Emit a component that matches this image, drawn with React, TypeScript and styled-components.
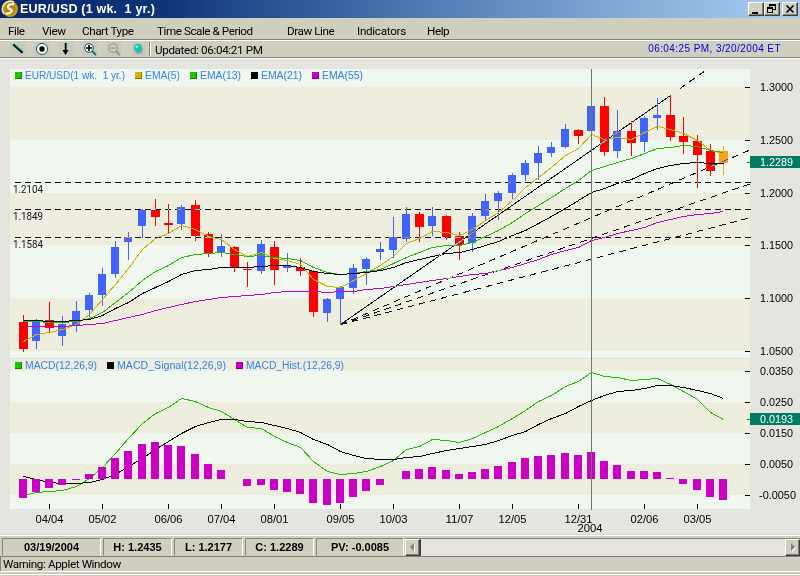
import React from "react";
import styled, { createGlobalStyle } from "styled-components";

const GlobalStyle = createGlobalStyle`
  html, body { margin: 0; padding: 0; overflow: hidden; background: #cfcebf; }
  * { box-sizing: border-box; }
`;

const Window = styled.div`
  width: 800px;
  height: 576px;
  display: flex;
  flex-direction: column;
  background: #cfcebf;
  color: #000;
  font-family: Roboto, "Liberation Sans", sans-serif;
  font-size: 11.7px;
  overflow: hidden;
`;

const TitleBar = styled.header`
  height: 18px;
  flex: none;
  display: flex;
  align-items: center;
  padding: 0 2px 0 1px;
  background: linear-gradient(90deg, #0a276c 0%, #0f3478 20%, #2e5c9a 38%, #5580b8 56%, #7ea4d2 75%, #a6caf0 97%);
`;

const Title = styled.h1`
  margin: 0 auto 0 1px;
  color: #fff;
  font: bold 12.5px/16px "Liberation Sans", sans-serif;
  letter-spacing: 0.2px;
  white-space: pre;
`;

const WindowButton = styled.button<{ $gap?: number }>`
  width: 16px;
  height: 14px;
  padding: 0;
  margin-left: ${(p) => p.$gap ?? 0}px;
  border: 1px solid;
  border-color: #fff #404040 #404040 #fff;
  box-shadow: inset -1px -1px #808078;
  background: #d2d0c3;
  display: flex;
`;

const MenuBar = styled.nav`
  height: 23px;
  flex: none;
  display: grid;
  grid-template-columns: 34px 40px 75px 130px 70px 70px 60px;
  padding: 5px 0 0 8px;
  border-bottom: 1px solid #fff;
  box-shadow: inset 0 -1px #808078;
`;

const MenuItem = styled.span<{ $spacing?: number }>`
  line-height: 16px;
  white-space: pre;
  letter-spacing: ${(p) => p.$spacing ?? -0.45}px;
`;

const ToolBar = styled.div`
  height: 18px;
  flex: none;
  display: flex;
  align-items: center;
  border-bottom: 1px solid #fff;
  box-shadow: inset 0 -1px #808078;
  padding-bottom: 2px;
`;

const ToolIcons = styled.svg`
  display: block;
  flex: none;
`;

const Updated = styled.span`
  margin-left: 4px;
  padding-top: 2px;
  line-height: 14px;
  letter-spacing: -0.37px;
`;

const Clock = styled.span`
  margin-left: auto;
  margin-right: 19px;
  color: #0000e8;
  font: 10px/14px "Liberation Sans", sans-serif;
  letter-spacing: 0.42px;
`;

const ChartPane = styled.main`
  height: 475px;
  flex: none;
`;

const ChartSvg = styled.svg`
  display: block;
  font-family: "Liberation Sans", sans-serif;
  font-size: 10px;
`;

const DataRow = styled.div`
  height: 22px;
  flex: none;
  display: flex;
  border-top: 1px solid #d8d8ce;
  box-shadow: inset 0 1px #fff;
  padding: 3px 0 0 2px;
`;

const DataCell = styled.div<{ $width: number }>`
  width: ${(p) => p.$width}px;
  margin-right: 2px;
  height: 18px;
  flex: none;
  border: 1px solid;
  border-color: #85857b #fff #cfcebf #85857b;
  font: bold 11px/16px "Liberation Sans", sans-serif;
  text-align: center;
  white-space: pre;
`;

const ScrollBar = styled.div`
  flex: 1;
  height: 18px;
  display: flex;
  border-top: 1px solid #85857b;
  margin-left: -1px;
`;

const ScrollButton = styled.button`
  width: 15px;
  height: 17px;
  padding: 0;
  border: 1px solid;
  border-color: #fff #404040 #404040 #fff;
  box-shadow: inset -1px -1px #808078;
  background: #cfcebf;
  display: flex;
`;

const ScrollTrack = styled.div`
  flex: 1;
  background: #e5e4dc;
  border-left: 1px solid #404040;
`;

const StatusLine = styled.footer`
  height: 15px;
  flex: none;
  border-top: 1px solid #808078;
  border-left: 1px solid #808078;
  padding-left: 2px;
  line-height: 15px;
  letter-spacing: -0.4px;
`;

const BottomEdge = styled.div`
  height: 4px;
  flex: none;
  border-top: 1px solid #fff;
  border-bottom: 1px solid #fff;
`;

type Tone = "r" | "b" | "o";
type Candle = [number, Tone, number, number, number, number];

// left edge, tone, body top, body bottom, wick top, wick bottom
const candles: Candle[] = [
  [19, "r", 322, 349, 315, 352], [32, "b", 321, 341, 319, 349], [45, "r", 320, 328, 302, 332],
  [58, "b", 324, 336, 316, 346], [72, "b", 311, 325, 301, 332], [85, "b", 295, 310, 293, 317],
  [98, "b", 274, 295, 268, 306], [111, "b", 247, 274, 241, 278], [124, "b", 237, 242, 232, 260],
  [138, "b", 210, 226, 209, 238], [151, "r", 210, 217, 199, 226], [164, "r", 223, 225, 204, 233],
  [177, "b", 207, 224, 205, 230], [191, "r", 205, 236, 200, 241], [204, "r", 234, 253, 232, 257],
  [217, "b", 246, 252, 234, 257], [230, "r", 247, 268, 246, 272], [243, "r", 269, 270, 262, 287],
  [257, "b", 244, 271, 240, 274], [270, "r", 247, 270, 241, 285], [283, "b", 266, 268, 253, 272],
  [296, "r", 267, 271, 258, 276], [309, "r", 271, 312, 270, 317], [323, "b", 299, 313, 298, 322],
  [336, "b", 287, 299, 286, 325], [349, "b", 268, 288, 264, 294], [362, "b", 259, 269, 257, 285],
  [376, "b", 249, 252, 242, 260], [389, "b", 237, 250, 217, 258], [402, "b", 214, 239, 207, 242],
  [415, "r", 214, 227, 212, 242], [428, "b", 216, 226, 207, 236], [442, "r", 216, 237, 215, 240],
  [455, "r", 236, 245, 232, 260], [468, "b", 216, 243, 213, 252], [481, "b", 201, 216, 194, 220],
  [494, "b", 193, 201, 191, 220], [508, "b", 175, 193, 173, 199], [521, "b", 163, 175, 160, 181],
  [534, "b", 153, 163, 146, 180], [547, "b", 147, 153, 142, 157], [561, "b", 129, 147, 124, 148],
  [574, "r", 130, 136, 129, 144], [587, "b", 106, 131, 101, 134], [600, "r", 106, 152, 97, 156],
  [613, "b", 131, 151, 110, 158], [627, "r", 131, 143, 121, 156], [640, "b", 118, 142, 116, 152],
  [653, "b", 115, 118, 98, 130], [666, "r", 115, 137, 95, 141], [679, "r", 136, 142, 117, 154],
  [693, "r", 141, 155, 135, 188], [706, "r", 151, 171, 144, 176], [719, "o", 151, 163, 146, 175],
];

const tones: Record<Tone, string> = { r: "#ff0000", b: "#4163ff", o: "#ffa010" };

const ema5 = [341, 334, 332, 329, 324, 314, 299, 284, 268, 249, 238, 233, 225, 229, 236, 239, 249, 256, 252, 258, 260, 264, 279, 286, 287, 280, 273, 265, 256, 243, 238, 231, 232, 235, 229, 220, 212, 200, 187, 177, 167, 155, 148, 134, 139, 137, 139, 132, 126, 129, 133, 140, 150, 153];
const ema13 = [321, 321, 322, 322, 321, 318, 312, 302, 292, 280, 271, 265, 257, 254, 253, 252, 254, 256, 255, 257, 258, 260, 267, 272, 274, 273, 271, 269, 263, 257, 252, 247, 245, 245, 242, 236, 230, 222, 213, 205, 197, 188, 180, 170, 166, 162, 158, 153, 148, 147, 145, 146, 150, 152];
const ema21 = [320, 320, 321, 321, 320, 319, 315, 308, 302, 293, 287, 281, 274, 270, 269, 267, 267, 267, 266, 265, 265, 267, 271, 273, 274, 273, 272, 270, 267, 262, 259, 256, 253, 252, 249, 245, 241, 235, 230, 223, 216, 208, 200, 192, 188, 183, 179, 173, 168, 165, 163, 162, 163, 163];
const ema55 = [326, 326, 326, 326, 325, 324, 323, 320, 317, 314, 310, 307, 304, 301, 299, 297, 296, 295, 294, 292, 291, 291, 291, 292, 291, 291, 289, 288, 286, 284, 282, 280, 278, 276, 274, 273, 270, 267, 263, 259, 254, 250, 247, 240, 237, 233, 230, 227, 222, 219, 216, 214, 213, 211];
const macd = [495, 492, 491, 490, 486, 478, 467, 453, 438, 423, 413, 407, 398, 401, 407, 411, 419, 427, 428, 436, 442, 447, 461, 471, 474, 473, 471, 466, 460, 449, 446, 439, 440, 442, 438, 432, 426, 418, 410, 401, 395, 386, 381, 372, 376, 377, 380, 379, 378, 384, 391, 399, 412, 419];
const signal = [476, 479, 482, 483, 483, 482, 479, 474, 466, 458, 449, 441, 433, 426, 422, 419, 419, 421, 422, 425, 428, 432, 439, 444, 451, 455, 458, 459, 459, 457, 456, 453, 450, 448, 446, 444, 440, 435, 431, 424, 418, 413, 406, 400, 395, 391, 390, 388, 385, 385, 387, 390, 393, 398];
const histogram = [-19, -13, -9, -6, -1, 5, 12, 21, 28, 35, 37, 34, 33, 25, 15, 9, 0, -7, -6, -11, -13, -15, -24, -26, -24, -18, -12, -6, 0, 8, 10, 12, 9, 5, 7, 10, 13, 17, 21, 23, 24, 26, 24, 27, 18, 14, 8, 8, 7, 1, -5, -11, -18, -21];

const bands: [number, number][] = [[87, 53], [193, 52], [298, 53], [359, 12], [402, 31], [464, 31]];

const scale: [number, string][] = [
  [87, "1.3000"], [140, "1.2500"], [193, "1.2000"], [245, "1.1500"], [298, "1.1000"], [351, "1.0500"],
  [371, "0.0350"], [402, "0.0250"], [433, "0.0150"], [464, "0.0050"], [495, "-0.0050"],
];

const dates: [number, string][] = [
  [49, "04/04"], [102, "05/02"], [168, "06/06"], [221, "07/04"], [274, "08/01"], [340, "09/05"],
  [393, "10/03"], [459, "11/07"], [512, "12/05"], [578, "12/31"], [644, "02/06"], [697, "03/05"],
];

// x, baseline, swatch, label, label width
const legend: [number, number, string, string, number][] = [
  [15, 79, "#22c400", "EUR/USD(1 wk.\u00a0 1 yr.)", 100], [135, 79, "#d6b400", "EMA(5)", 35],
  [190, 79, "#22c400", "EMA(13)", 41], [251, 79, "#000000", "EMA(21)", 41], [312, 79, "#cc00c4", "EMA(55)", 41],
  [15, 369, "#22c400", "MACD(12,26,9)", 72], [107, 369, "#000000", "MACD_Signal(12,26,9)", 109],
  [236, 369, "#cc00c4", "MACD_Hist.(12,26,9)", 98],
];

const levels: [number, string][] = [[182, "1.2104"], [209, "1.1849"], [237, "1.1584"]];

const fans: [number, number, number, number][] = [
  [341, 324, 751, 149], [341, 324, 751, 183], [341, 324, 751, 217], [680, 88, 707, 69],
];

const Curve = ({ values, color }: { values: number[]; color: string }) => (
  <polyline
    points={values.map((v, i) => `${candles[i][0] + 4.5},${v + 0.5}`).join(" ")}
    fill="none"
    stroke={color}
    strokeWidth="1"
    shapeRendering="crispEdges"
  />
);

const InvertedLines = styled.g`
  mix-blend-mode: difference;
`;

const LevelText = styled.text`
  font: 400 11px Roboto, sans-serif;
  fill: #1a0f22;
`;

const PriceTag = ({ y, label }: { y: number; label: string }) => (
  <g>
    <rect x="750" y={y - 6} width="50" height="12" fill="#007c60" />
    <rect x="747" y={y} width="3" height="1" fill="#007c60" />
    <text x="760" y={y + 4} fill="#fff" textLength="33" lengthAdjust="spacingAndGlyphs">{label}</text>
  </g>
);

const Chart = () => (
  <ChartSvg width="800" height="475" viewBox="0 59 800 475">
    <defs>
      <pattern id="grain" width="4" height="4" patternUnits="userSpaceOnUse">
        <rect width="4" height="4" fill="#e5e5df" />
        <rect width="1" height="1" fill="#dedfdc" />
        <rect x="2" y="2" width="1" height="1" fill="#eae4e0" />
      </pattern>
      <pattern id="bandGrain" width="4" height="4" patternUnits="userSpaceOnUse">
        <rect width="4" height="4" fill="#eeeedf" />
        <rect x="1" y="1" width="1" height="1" fill="#e8ebdb" />
        <rect x="3" y="3" width="1" height="1" fill="#f0ece2" />
      </pattern>
    </defs>
    <rect y="59" width="800" height="475" fill="url(#grain)" />
    <rect x="10" y="69" width="740" height="440" fill="#eff7ef" />
    {bands.map(([y, h]) => <rect key={y} x="10" y={y} width="740" height={h} fill="url(#bandGrain)" />)}
    <rect x="10" y="358" width="740" height="1" fill="#dde3dd" />

    {scale.map(([y, label]) => (
      <g key={label}>
        <rect x="745" y={y} width="5" height="1" />
        <text
          x={label[0] === "-" ? 759 : 760}
          y={y + 4}
          textLength={label[0] === "-" ? 37 : 33}
          lengthAdjust="spacingAndGlyphs"
        >
          {label}
        </text>
      </g>
    ))}
    {dates.map(([x, label]) => (
      <g key={label}>
        <rect x={x} y="504" width="1" height="5" />
        <text x={x - 13.5} y="523" textLength="28" lengthAdjust="spacingAndGlyphs">{label}</text>
      </g>
    ))}
    <text x="577.5" y="532" textLength="25" lengthAdjust="spacingAndGlyphs">2004</text>

    {candles.map(([x, tone, top, bottom, high, low]) => (
      <g key={x} fill={tones[tone]}>
        <rect x={x + 4} y={high} width="1" height={low - high} />
        <rect x={x} y={top} width={tone === "b" ? 8 : 9} height={bottom - top} />
      </g>
    ))}
    <Curve values={ema5} color="#ceb000" />
    <Curve values={ema13} color="#20be00" />
    <Curve values={ema21} color="#000" />
    <Curve values={ema55} color="#cc00c0" />

    <Curve values={macd} color="#20be00" />
    <Curve values={signal} color="#000" />
    {histogram.map((v, i) => v !== 0 && (
      <rect key={i} x={candles[i][0]} y={v > 0 ? 479 - v : 479} width="8" height={Math.abs(v)} fill="#cc00c4" />
    ))}

    <rect x="591" y="69" width="1" height="441" fill="#70776d" />

    <InvertedLines stroke="#fff" strokeWidth="1" shapeRendering="crispEdges">
      {levels.map(([y]) => <path key={y} d={`M15 ${y + 0.5}H751`} strokeDasharray="6 4" />)}
      <path d="M340.5 324.5L670.5 95.5" />
      {fans.map(([x1, y1, x2, y2]) => (
        <line key={y2} x1={x1} y1={y1 + 0.5} x2={x2} y2={y2 + 0.5} strokeDasharray="6.5 5" />
      ))}
    </InvertedLines>
    {levels.map(([y, label]) => (
      <LevelText key={label} x="13" y={y + 11} textLength="30" lengthAdjust="spacingAndGlyphs">{label}</LevelText>
    ))}

    {legend.map(([x, y, color, label, width]) => (
      <g key={label}>
        <rect x={x} y={y - 7} width="7" height="7" fill={color} />
        <path d={`M${x} ${y - 0.5}h6.5v-6.5`} fill="none" stroke="#000" strokeOpacity="0.35" shapeRendering="crispEdges" />
        <text x={x + 10} y={y} fill="#3180f4" textLength={width} lengthAdjust="spacingAndGlyphs">{label}</text>
      </g>
    ))}

    <PriceTag y={162} label="1.2289" />
    <PriceTag y={419} label="0.0193" />
  </ChartSvg>
);

const Coin = () => (
  <svg width="18" height="18" viewBox="0 0 18 18">
    <circle cx="9" cy="9" r="8" fill="#c39a28" />
    <path d="M3 14A8 8 0 0 1 13 2" fill="none" stroke="#f6e9a8" strokeWidth="1.6" />
    <circle cx="9" cy="9" r="5.6" fill="#b08718" />
    <path d="M13 4.4C8.5 3.6 6 6 7.4 8c1.3 1.7 4 1.1 3.2 3.2-.7 1.8-3.6 2.6-6.1 2" fill="none" stroke="#fff8dc" strokeWidth="2.2" />
  </svg>
);

export default function App() {
  return (
    <>
      <GlobalStyle />
      <Window>
        <TitleBar>
          <Coin />
          <Title>{"EUR/USD (1 wk.  1 yr.)"}</Title>
          <WindowButton aria-label="Minimize">
            <svg width="14" height="12"><rect x="3" y="9" width="6" height="2" /></svg>
          </WindowButton>
          <WindowButton aria-label="Restore">
            <svg width="14" height="12" fill="none" stroke="#000" shapeRendering="crispEdges">
              <path d="M4.5 4V1.500h6v5H8M4 2.500h7M2.500 4.500h5v5h-5zM2 5.500h6" />
            </svg>
          </WindowButton>
          <WindowButton aria-label="Close" $gap={2}>
            <svg width="14" height="12" fill="none" stroke="#000" strokeWidth="1.7"><path d="M3.500 2.500l7 7M10.500 2.500l-7 7" /></svg>
          </WindowButton>
        </TitleBar>
        <MenuBar>
          <MenuItem>File</MenuItem>
          <MenuItem>View</MenuItem>
          <MenuItem>Chart Type</MenuItem>
          <MenuItem>{"Time Scale & Period"}</MenuItem>
          <MenuItem>Draw Line</MenuItem>
          <MenuItem $spacing={-0.3}>Indicators</MenuItem>
          <MenuItem>Help</MenuItem>
        </MenuBar>
        <ToolBar>
          <ToolIcons width="151" height="16" viewBox="0 41 151 16">
            <g fill="#c7c9c1">
              <rect x="10" y="42" width="15" height="14" /><rect x="35" y="42" width="14" height="14" />
              <rect x="59" y="42" width="14" height="14" /><rect x="83" y="42" width="14" height="14" />
              <rect x="107" y="42" width="14" height="14" /><rect x="132" y="42" width="14" height="14" />
            </g>
            <path d="M13.5 44.5l9 8" stroke="#008068" strokeWidth="2.5" />
            <path d="M13 44.5l9.5 8.5" stroke="#000" strokeWidth="1.1" />
            <circle cx="42" cy="49" r="5.5" fill="#fff" stroke="#005c48" />
            <circle cx="42" cy="49" r="2.7" />
            <path d="M65.5 43v10" stroke="#000" strokeWidth="1.5" />
            <path d="M66.5 43v8" stroke="#008068" />
            <path d="M62.5 50h6l-3 5z" />
            <path d="M92 51l4 4" stroke="#008068" strokeWidth="2" />
            <circle cx="89" cy="48" r="4.3" fill="#fff" stroke="#005c48" />
            <path d="M86 48h6M89 45v6" stroke="#000" strokeWidth="1.6" />
            <path d="M116 51l4 4" stroke="#929289" strokeWidth="1.8" />
            <circle cx="113" cy="48" r="4.3" fill="#cdcdc3" stroke="#929289" />
            <path d="M110.5 48h5" stroke="#858580" />
            <circle cx="139" cy="50" r="4" fill="#9aaca0" />
            <circle cx="138" cy="48" r="4.2" fill="#1cc4a4" />
            <circle cx="136.7" cy="46.8" r="1.2" fill="#c8fff0" />
            <rect x="149" y="42" width="1" height="14" fill="#808078" />
            <rect x="150" y="42" width="1" height="14" fill="#fff" />
          </ToolIcons>
          <Updated>Updated: 06:04:21 PM</Updated>
          <Clock>06:04:25 PM, 3/20/2004 ET</Clock>
        </ToolBar>
        <ChartPane><Chart /></ChartPane>
        <DataRow>
          <DataCell $width={99}>03/19/2004</DataCell>
          <DataCell $width={69}>H: 1.2435</DataCell>
          <DataCell $width={69}>L: 1.2177</DataCell>
          <DataCell $width={69}>C: 1.2289</DataCell>
          <DataCell $width={88}>PV: -0.0085</DataCell>
          <ScrollBar>
            <ScrollButton aria-label="Scroll left">
              <svg width="13" height="15"><path d="M9 4v8l-4-4z" fill="#fff" /><path d="M8 3v8L4 7z" fill="#808078" /></svg>
            </ScrollButton>
            <ScrollTrack />
            <ScrollButton aria-label="Scroll right">
              <svg width="13" height="15"><path d="M6 4v8l4-4z" fill="#fff" /><path d="M5 3v8l4-4z" fill="#808078" /></svg>
            </ScrollButton>
          </ScrollBar>
        </DataRow>
        <StatusLine>Warning: Applet Window</StatusLine>
        <BottomEdge />
      </Window>
    </>
  );
}
